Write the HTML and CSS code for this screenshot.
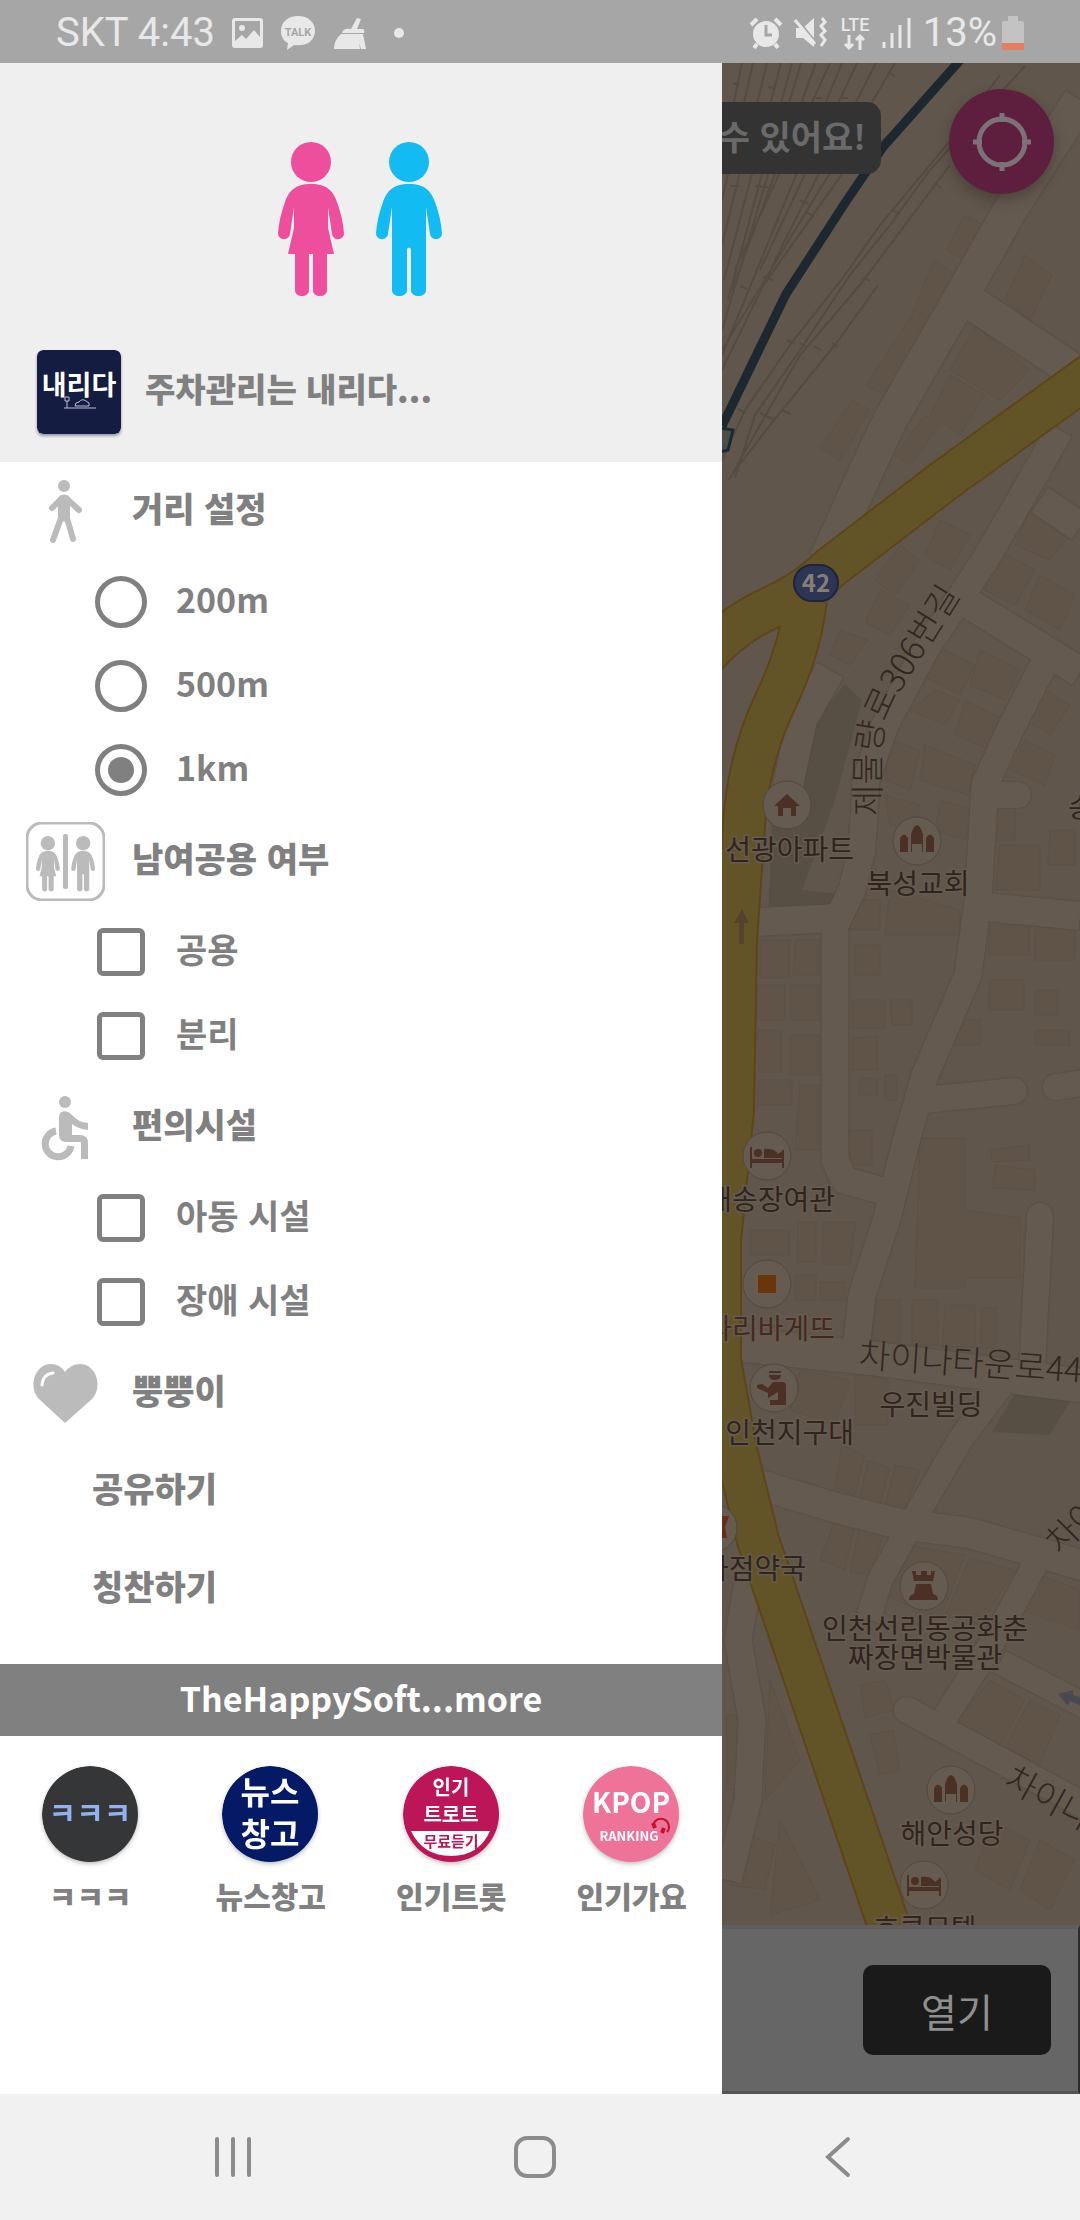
FILE: index.html
```html
<!DOCTYPE html>
<html lang="ko">
<head>
    <meta charset="UTF-8">
    <meta name="viewport" content="width=device-width, initial-scale=1.0">
    <title>화장실 찾기</title>
    <link rel="stylesheet" href="styles.css">
</head>
<body>
    <!-- shared shapes -->
    <svg class="defs" width="0" height="0" aria-hidden="true">
        <defs>
            <g id="woman">
                <circle cx="33" cy="20" r="20"/>
                <path d="M33 42C17 42 11 49 7 60C3 71 1 80 0 91C0 99 11 99 12 92L16 65V86L10 112H17V148C17 156 31 156 31 148V112H35V148C35 156 49 156 49 148V112H56L50 86V65L54 92C55 99 66 99 66 91C65 80 63 71 59 60C55 49 49 42 33 42Z"/>
            </g>
            <g id="man">
                <circle cx="33" cy="20" r="20"/>
                <path d="M33 42C17 42 11 49 7 60C3 71 1 80 0 91C0 99 11 99 12 92L16 65V148C16 156 31 156 31 148V107Q33 104 35 107V148C35 156 50 156 50 148V65L54 92C55 99 66 99 66 91C65 80 63 71 59 60C55 49 49 42 33 42Z"/>
            </g>
            <g id="poi-church">
                <path d="M-17 13V-1Q-13 -8 -9 -1V13ZM9 13V-1Q13 -8 17 -1V13ZM-6 13V-4Q-4 -13 0 -14Q4 -13 6 -4V13H5V5H-5V13Z"/>
            </g>
            <g id="poi-bed">
                <path d="M-17 -9H-15V3H15V-6H17V12H15V7H-15V12H-17ZM-3 2V-7Q7 -8 11 -2L15 -5V2Z"/>
                <circle cx="-9" cy="-3" r="4"/>
            </g>
        </defs>
    </svg>

    <header class="status-bar">
        <div class="status-group">
            <span>SKT 4:43</span>
            <svg width="31" height="30" viewBox="0 0 31 30"><path fill="#e8e8e8" fill-rule="evenodd" d="M3 0H28Q31 0 31 3V27Q31 30 28 30H3Q0 30 0 27V3Q0 0 3 0ZM3 23L10 17L14 21L22 12L28 19V3H3Z"/><circle cx="10" cy="10" r="3" fill="#e8e8e8"/></svg>
            <svg width="36" height="34" viewBox="0 0 36 34"><path fill="#e8e8e8" d="M18 0C8 0 1 6 1 15C1 21 4 25 8 27L7 34L14 29C27 31 35 24 35 15C35 6 28 0 18 0Z"/><text x="18" y="20" class="talk">TALK</text></svg>
            <svg width="34" height="32" viewBox="0 0 34 32"><path fill="#e8e8e8" d="M24 1L28 2L24 12H30Q32 13 31 16H9Q10 11 18 12ZM8 17H30L33 32H28L26 26L27 32H1Q1 23 8 17Z"/></svg>
            <span class="dot"></span>
        </div>
        <div class="status-group right">
            <svg width="34" height="32" viewBox="0 0 34 32"><g fill="none" stroke="#e8e8e8" stroke-width="4"><path d="M2 8L8 2M32 8L26 2M8 27L5 31M26 27L29 31"/></g><circle cx="17" cy="17" r="13" fill="#e8e8e8"/><path d="M17 8V18H23" fill="none" stroke="#a6a6a6" stroke-width="3"/></svg>
            <svg width="34" height="32" viewBox="0 0 34 32"><path fill="#e8e8e8" d="M2 11H9L20 1V30L9 21H2Z"/><path stroke="#a6a6a6" stroke-width="2" d="M3 2L21 24"/><path stroke="#e8e8e8" stroke-width="3" d="M1 3L21 27"/><path fill="none" stroke="#e8e8e8" stroke-width="3" d="M28 1L31 5L27 9L31 14L27 18L31 23L27 29"/></svg>
            <svg width="32" height="38" viewBox="0 0 32 38"><text x="16" y="17" class="lte">LTE</text><path fill="none" stroke="#e8e8e8" stroke-width="3" d="M10 21V34M6 30L10 34L14 30M21 36V22M17 26L21 22L25 26"/></svg>
            <svg width="30" height="32" viewBox="0 0 30 32"><path stroke="#e8e8e8" stroke-width="3" d="M2 25V31M10 16V31M18 8V31M27 1V31"/></svg>
            <span class="battery-text">13%</span>
            <svg width="22" height="34" viewBox="0 0 22 34"><path fill="#c3c3c3" d="M6 0H16V5H20Q22 5 22 7V27H0V7Q0 5 2 5H6Z"/><path fill="#e67e62" d="M0 27H22V32Q22 34 20 34H2Q0 34 0 32Z"/></svg>
        </div>
    </header>

    <main class="screen">
        <aside class="drawer">
            <div class="drawer-header">
                <svg class="logo" width="166" height="156" viewBox="0 0 166 156">
                    <use href="#woman" fill="#ee4f9d"/>
                    <use href="#man" x="98" fill="#12bcf3"/>
                </svg>
                <a class="promo" href="#">
                    <svg class="promo-icon" width="84" height="84" viewBox="0 0 84 84">
                        <rect width="84" height="84" rx="6" fill="#141c42"/>
                        <text x="42" y="45" class="promo-logo">내리다</text>
                        <path fill="none" stroke="#b9bdd0" stroke-width="1" d="M27 58H59M30 58V51M28 47H32V51H28ZM38 56L39 53L42 52Q45 48 49 51L52 53V56Z"/>
                    </svg>
                    <span class="label">주차관리는 내리다...</span>
                </a>
            </div>

            <form class="settings">
                <h2 class="section-title">
                    <svg width="79" height="79" viewBox="0 0 79 79" fill="none" stroke="#bbb" stroke-width="6" stroke-linecap="round" stroke-linejoin="round">
                        <circle cx="38" cy="14" r="6" fill="#bbb" stroke="none"/>
                        <path d="M26 36L36 26H40L53 38M35 30V46L27 68M41 30V46L47 67"/>
                        <path d="M38 28V44" stroke-width="11"/>
                    </svg>
                    <span class="label">거리 설정</span>
                </h2>
                <label class="option"><input type="radio" name="distance"><span class="label">200m</span></label>
                <label class="option"><input type="radio" name="distance"><span class="label">500m</span></label>
                <label class="option"><input type="radio" name="distance" checked><span class="label">1km</span></label>

                <h2 class="section-title">
                    <svg width="79" height="79" viewBox="0 0 79 79" fill="#bbb">
                        <rect x="1" y="1" width="77" height="77" rx="15" fill="none" stroke="#bbb" stroke-width="3"/>
                        <g transform="translate(10 14) scale(.36)"><use href="#woman"/><use href="#man" x="98"/></g>
                        <rect x="37" y="12" width="5" height="55" rx="2"/>
                    </svg>
                    <span class="label">남여공용 여부</span>
                </h2>
                <label class="option"><input type="checkbox"><span class="label">공용</span></label>
                <label class="option"><input type="checkbox"><span class="label">분리</span></label>

                <h2 class="section-title">
                    <svg width="79" height="79" viewBox="0 0 79 79" fill="#bbb">
                        <circle cx="39" cy="14" r="6"/>
                        <path d="M33 30C33 21 42 22 46 27Q52 34 62 35V42Q52 41 46 36V47H54Q62 47 62 55V71H55V54H40Q33 54 33 47Z"/>
                        <path d="M30 43A13 13 0 1 0 45 58" fill="none" stroke="#bbb" stroke-width="7"/>
                    </svg>
                    <span class="label">편의시설</span>
                </h2>
                <label class="option"><input type="checkbox"><span class="label">아동 시설</span></label>
                <label class="option"><input type="checkbox"><span class="label">장애 시설</span></label>

                <h2 class="section-title">
                    <svg width="79" height="79" viewBox="0 0 79 79">
                        <path fill="#bbb" d="M39 69L13 45C2 34 8 10 25 10Q34 10 39 18Q45 10 54 10C71 10 77 34 66 45Z"/>
                        <path fill="none" stroke="#fff" stroke-width="3" stroke-linecap="round" d="M16 31Q17 20 27 19"/>
                    </svg>
                    <span class="label">뿡뿡이</span>
                </h2>
                <button type="button" class="menu-link">공유하기</button>
                <button type="button" class="menu-link">칭찬하기</button>
            </form>

            <a class="more" href="#">TheHappySoft...more</a>

            <nav class="apps">
                <a href="#">
                    <svg class="app-icon" viewBox="0 0 97 97">
                        <circle cx="48" cy="48" r="48" fill="#353637"/>
                        <text x="48" y="58" font-size="30" fill="#93b1f0">ㅋㅋㅋ</text>
                    </svg>
                    ㅋㅋㅋ
                </a>
                <a href="#">
                    <svg class="app-icon" viewBox="0 0 97 97">
                        <circle cx="48" cy="48" r="48" fill="#051a66"/>
                        <text x="48" y="38" font-size="32" fill="#fff">뉴스</text>
                        <text x="48" y="80" font-size="32" fill="#fff">창고</text>
                    </svg>
                    뉴스창고
                </a>
                <a href="#">
                    <svg class="app-icon" viewBox="0 0 97 97">
                        <circle cx="48" cy="48" r="48" fill="#bd1658"/>
                        <path fill="#fff" d="M8 65H87Q76 90 48 90T8 65Z"/>
                        <text x="48" y="29" font-size="20" fill="#fff">인기</text>
                        <text x="48" y="56" font-size="20" fill="#fff">트로트</text>
                        <text x="48" y="81" font-size="15" fill="#bd1658">무료듣기</text>
                    </svg>
                    인기트롯
                </a>
                <a href="#">
                    <svg class="app-icon" viewBox="0 0 97 97">
                        <circle cx="48" cy="48" r="48" fill="#ef7399"/>
                        <text x="48" y="47" font-size="28" fill="#fff">KPOP</text>
                        <text x="46" y="75" font-size="13" fill="#fff">RANKING</text>
                        <path fill="none" stroke="#c4122b" stroke-width="2" d="M70 60A8 8 0 1 1 84 66"/>
                        <path stroke="#c4122b" stroke-width="4" d="M70 57L72 62M81 62L79 67"/>
                    </svg>
                    인기가요
                </a>
            </nav>
        </aside>

        <section class="content">
            <div class="map">
                <svg class="map-canvas" viewBox="722 63 358 1862" preserveAspectRatio="xMinYMin slice">
                    <defs>
                        <path id="street-306" d="M880 816V770C880 735 886 715 900 692L966 586"/>
                        <g id="streets">
                            <path d="M1080 100L1010 210L965 290L890 420L862 480L826 560M975 305L1080 375" stroke-width="34"/>
                            <path d="M1060 430L1020 500L985 560L925 650L885 725L866 780L862 850L852 890L835 925V1160L844 1180L886 1192" stroke-width="27"/>
                            <path d="M1040 500L1080 527M950 592L1080 672" stroke-width="30"/>
                            <path d="M1045 662L1010 730L985 785L978 900L968 975L925 1075L905 1145L888 1215L862 1295L856 1350" stroke-width="27"/>
                            <path d="M758 922L838 918M965 905L1080 916" stroke-width="28"/>
                            <path d="M925 1100L1014 1091M1056 1087L1090 1082M1040 1216L1032 1370M907 1710L1085 1806M985 795H1018" stroke-width="26" stroke-linecap="round"/>
                            <path d="M735 1344L870 1358L1085 1386" stroke-width="34"/>
                            <path d="M750 1482L830 1506L900 1524L970 1533L1085 1566" stroke-width="30"/>
                            <path d="M1005 1380L960 1440L905 1535L880 1580L868 1620M1040 1555L1000 1630L940 1725M1000 1662L1085 1706" stroke-width="25"/>
                            <path d="M750 1570L738 1640L752 1720L748 1800L728 1880" stroke-width="27"/>
                            <path d="M830 670L802 720L785 800" stroke-width="30"/>
                        </g>
                        <g id="highway">
                            <path d="M1100 368L945 480L830 568Q806 592 768 609T700 662"/>
                            <path d="M806 600Q800 650 776 700T745 810L736 940L733 1110L720 1240V1360L736 1450L758 1540L792 1640L892 1935"/>
                        </g>
                    </defs>

                    <rect x="722" y="63" width="2000" height="1862" fill="#61564b"/>

                    <!-- lots and buildings -->
                    <path fill="#574f44" d="M845 684L862 700L835 800L802 890L850 895L835 925H768L772 810L800 740ZM1020 1385H1080L1050 1435L992 1432Z"/>
                    <g fill="#605449" stroke="#5b5147" stroke-width="1">
                        <path d="M965 215L983 225L965 260L946 250ZM934 260L957 276L930 330L910 318ZM915 310L932 320L884 395L866 385ZM852 400L870 410L840 460L820 448Z"/>
                        <path d="M1025 255L1052 275L1030 320L1005 300ZM975 325L1030 370L1000 400L950 370ZM950 375L985 395L960 435L930 415ZM925 415L940 425L910 465L895 455Z"/>
                        <path d="M940 520L970 535L950 570L925 555ZM900 545L920 560L895 595L875 580ZM880 590L910 605L890 635L865 622ZM840 630L868 640L850 665L830 655Z"/>
                        <path d="M1000 550L1035 570L1015 605L985 590ZM1040 575L1075 595L1060 630L1025 610ZM1030 510L1070 535L1050 560L1015 545Z"/>
                        <path d="M925 640L975 665L960 695L910 670ZM980 650L1020 670L1005 700L970 685ZM935 690L960 700L945 725L910 710ZM965 700L1005 720L990 750L955 735Z"/>
                        <path d="M890 740L920 750L910 790L885 780ZM925 745L975 765L968 795L920 780ZM885 795L920 805L915 830L890 825ZM940 800L975 810L965 840L935 830Z"/>
                        <path d="M1045 690L1070 705L1050 735L1025 720ZM1025 740L1055 755L1045 785L1010 770ZM1050 830H1075V865H1048ZM995 800H1015V840H992ZM1000 845H1040V890H996Z"/>
                        <path d="M850 900H880V930H850ZM890 890L960 910V935H885ZM855 945H880V975H855ZM990 925H1030V955H988ZM1035 925H1075V960H1034Z"/>
                        <path d="M760 940H790V978H760ZM795 940H820V975H793ZM757 985H785V1020H757ZM790 985H820V1020H790ZM758 1030H782V1072H758ZM790 1035H820V1075H790ZM758 1080H792V1105H758ZM800 1085H820V1150H795Z"/>
                        <path d="M852 1000H885V1028H852ZM890 1000H912V1025H892ZM852 1038L878 1036V1070H852ZM860 1078H878V1095H858ZM885 1075H897V1100H885ZM850 1130H872V1165H850Z"/>
                        <path d="M920 1138H965V1210L1020 1218V1278H965V1288H915ZM990 1150L1030 1145V1160L992 1162ZM995 1165L1035 1170V1190L992 1188ZM955 1020H980V1045H952ZM990 980H1024V1010H988ZM1035 990H1058V1015H1035ZM1035 1030H1070V1045H1035Z"/>
                        <path d="M750 1230H790V1255H750ZM798 1222H816V1262H797ZM823 1222H856L850 1264H822ZM795 1275H816V1300H795ZM820 1282H845V1300H820ZM875 1300H900V1342H872ZM912 1300H938V1345H912ZM945 1305H975V1347H942ZM982 1308H996V1348H980Z"/>
                        <path d="M800 1370L850 1380L835 1425L790 1410ZM855 1372L888 1380V1425H855ZM842 1445L865 1455L855 1495L835 1488ZM868 1460L890 1468L880 1505L860 1498ZM895 1465L920 1470L905 1510L885 1505Z"/>
                        <path d="M835 1520L855 1525L845 1570L820 1560ZM860 1525L885 1530L870 1575L850 1572ZM905 1545L965 1555L940 1620L885 1595ZM970 1558L1015 1570L980 1625L945 1615ZM1040 1575L1080 1590V1630L1020 1610Z"/>
                        <path d="M990 1680L1025 1700L1000 1745L955 1722ZM1030 1700L1060 1715L1040 1765L1005 1748ZM860 1685L885 1680L895 1710L865 1718ZM870 1735L893 1730L900 1770L880 1775ZM770 1680L800 1760L765 1800ZM780 1820L820 1900L770 1915Z"/>
                        <path d="M726 1715H745V1790H726ZM735 1830L775 1845L765 1890L730 1885ZM990 1820L1030 1840L1010 1890L975 1870ZM1040 1840L1075 1860L1050 1910L1020 1890Z"/>
                    </g>

                    <!-- railway -->
                    <g class="rails">
                        <path d="M742 63L722 160M753 63L722 200M767 63L722 245M781 63L724 280M792 63L728 300M801 63L722 330M816 63L732 290M830 63L735 270M842 63L722 355M857 63L760 270M876 63L790 230L722 370M895 63L850 140L722 350M920 110L845 170L760 290"/>
                        <path d="M1000 75L955 135L880 225L845 275L790 345L745 410L722 460M1025 66L930 170L890 225L850 275L800 350L755 415L735 478M950 165L860 285L800 355L760 425L730 478M878 285L835 345L770 425L728 480"/>
                        <path d="M733 83L739 85M768 87L775 88M888 72L895 76M816 98H822M840 98H848M730 186H740M755 186L775 188M800 200L808 204M805 212L814 216M763 277L773 280M740 286L747 289M892 210L900 214M935 183L941 188M862 278L870 281M787 340L795 344M800 343L806 347M814 346L821 350M832 343L838 347M738 409L746 413M760 413L775 420M782 410L790 414"/>
                    </g>
                    <path fill="none" stroke="#1c2730" stroke-width="9" d="M962 58L883 147L845 203L786 294L722 426"/>
                    <path fill="#4d4d48" stroke="#1b2a33" stroke-width="3" d="M720 428L733 430L728 450L720 452Z"/>

                    <use href="#streets" class="street-edge"/>
                    <use href="#streets" class="street-fill"/>
                    <use href="#highway" class="highway-edge"/>
                    <use href="#highway" class="highway-fill"/>
                    <path fill="#51442b" d="M742 909L749 923H744V944H739V923H734Z"/>
                    <path fill="#4b4950" d="M1058 1694L1073 1690V1695L1082 1698V1706L1070 1701L1068 1706Z"/>

                    <rect x="794" y="565" width="44" height="36" rx="18" fill="#2c3554" stroke="#20233c" stroke-width="2"/>
                    <text x="816" y="592" class="route">42</text>

                    <g fill="#655b51" stroke="#51483f" stroke-width="1">
                        <circle cx="787" cy="805" r="24"/>
                        <circle cx="917" cy="841" r="24"/>
                        <circle cx="767" cy="1156" r="24"/>
                        <circle cx="767" cy="1284" r="24"/>
                        <circle cx="774" cy="1388" r="24"/>
                        <circle cx="713" cy="1528" r="24"/>
                        <circle cx="924" cy="1586" r="24"/>
                        <circle cx="951" cy="1790" r="24"/>
                        <circle cx="924" cy="1885" r="24"/>
                    </g>
                    <g fill="#4b3026">
                        <path d="M787 794L800 806H796V816H791V808H783V816H778V806H774Z"/>
                        <use href="#poi-church" x="917" y="839"/>
                        <use href="#poi-church" x="951" y="1789"/>
                        <use href="#poi-bed" x="767" y="1156"/>
                        <use href="#poi-bed" x="924" y="1884"/>
                        <path d="M769 1371H781V1373H769ZM769 1375H781Q781 1380 775 1380T769 1375ZM757 1385L762 1384L768 1388L773 1382H783Q786 1382 786 1386V1405H770V1400H778V1392L768 1398V1393L757 1388Z"/>
                        <path d="M912 1571H916V1575H921V1571H927V1575H931V1571H935L933 1581H914ZM916 1584H931L933 1594Q938 1595 938 1600H909Q909 1595 914 1594Z"/>
                    </g>
                    <path fill="#6b2b17" d="M720 1516H729L725 1527L727 1538H720Z"/>
                    <rect x="758" y="1275" width="18" height="18" fill="#693609"/>

                    <g class="street-label">
                        <text><textPath href="#street-306">제물량로306번길</textPath></text>
                        <text transform="translate(858 1367) rotate(4)">차이나타운로44</text>
                        <text transform="translate(1060 1556) rotate(-45)">차이</text>
                        <text transform="translate(1002 1786) rotate(29)">차이나</text>
                    </g>
                    <g class="place-label">
                        <text x="854" y="860" text-anchor="end">선광아파트</text>
                        <text x="918" y="894" text-anchor="middle">북성교회</text>
                        <text x="1068" y="818">송</text>
                        <text x="835" y="1210" text-anchor="end">해송장여관</text>
                        <text x="835" y="1339" text-anchor="end" class="brown">파리바게뜨</text>
                        <text x="931" y="1415" text-anchor="middle">우진빌딩</text>
                        <text x="854" y="1443" text-anchor="end">인천지구대</text>
                        <text x="806" y="1579" text-anchor="end">가점약국</text>
                        <text x="925" y="1639" text-anchor="middle">인천선린동공화춘</text>
                        <text x="925" y="1668" text-anchor="middle">짜장면박물관</text>
                        <text x="952" y="1844" text-anchor="middle">해안성당</text>
                        <text x="925" y="1939" text-anchor="middle">호콕모텔</text>
                    </g>
                </svg>
                <div class="toast">수 있어요!</div>
                <button type="button" class="locate" aria-label="현재 위치">
                    <svg width="58" height="58" viewBox="0 0 58 58" fill="none" stroke="#7d7278" stroke-width="5"><circle cx="29" cy="29" r="23"/><path d="M29 0V9M29 49V58M0 29H9M49 29H58"/></svg>
                </button>
            </div>
            <div class="ad-bar">
                <button type="button">열기</button>
            </div>
        </section>
    </main>

    <footer class="nav-bar">
        <button type="button" aria-label="최근 앱"><svg width="42" height="42" viewBox="0 0 42 42"><path d="M5 3V39M21 3V39M37 3V39"/></svg></button>
        <button type="button" aria-label="홈"><svg width="42" height="42" viewBox="0 0 42 42"><rect x="2" y="2" width="38" height="38" rx="11"/></svg></button>
        <button type="button" aria-label="뒤로"><svg width="42" height="42" viewBox="0 0 42 42"><path d="M31 3L11 21L31 39"/></svg></button>
    </footer>
</body>
</html>
```

FILE: styles.css
```css
* {
    box-sizing: border-box;
}
body {
    margin: 0;
    min-height: 100vh;
    display: flex;
    flex-direction: column;
    background-color: #ffffff;
    color: #808080;
    font-family: "Noto Sans CJK KR", sans-serif;
    font-size: 34px;
    line-height: 1;
}
button {
    border: none;
    background: none;
    padding: 0;
    font: inherit;
    color: inherit;
}
a {
    color: inherit;
    text-decoration: none;
}
svg {
    display: block;
    flex-shrink: 0;
}
.defs {
    position: absolute;
}

/* Status bar */
.status-bar {
    display: flex;
    justify-content: space-between;
    align-items: center;
    height: 63px;
    padding: 2px 56px 0;
    background-color: #a6a6a6;
    color: #e8e8e8;
    font-family: Roboto, sans-serif;
    font-size: 40px;
}
.status-group {
    display: flex;
    align-items: center;
    gap: 17px;
}
.status-group.right {
    gap: 11px;
}
.dot {
    width: 10px;
    height: 10px;
    margin-left: 10px;
    border-radius: 50%;
    background-color: #e8e8e8;
}
.battery-text {
    margin-right: -6px;
}
.talk {
    font-size: 11px;
    font-weight: bold;
    fill: #a6a6a6;
    text-anchor: middle;
}
.lte {
    font-size: 18px;
    font-weight: 500;
    fill: #e8e8e8;
    text-anchor: middle;
}

/* Drawer over the left two thirds */
.screen {
    flex: 1;
    display: grid;
    grid-template-columns: 722fr 358fr;
}
.drawer {
    min-width: 0;
    background-color: #ffffff;
    font-weight: 900;
}
.drawer-header {
    padding: 79px 37px 28px;
    background-color: #efefef;
}
.label {
    padding-bottom: 7px;
}
.logo {
    margin: 0 auto 52px;
}
.promo {
    display: flex;
    align-items: center;
    gap: 24px;
    font-size: 33px;
}
.promo-icon {
    border-radius: 6px;
    box-shadow: 0 2px 3px rgba(20, 28, 66, 0.4);
}
.promo-logo {
    font-size: 27px;
    font-weight: bold;
    fill: #ffffff;
    text-anchor: middle;
}
.settings {
    margin-bottom: 26px;
}
.section-title {
    display: flex;
    align-items: center;
    gap: 27px;
    height: 98px;
    margin: 0;
    padding-left: 26px;
    font-size: 34px;
    font-weight: 900;
}
.option {
    display: flex;
    align-items: center;
    gap: 29px;
    height: 84px;
    padding-left: 95px;
    font-weight: bold;
}
.option input {
    appearance: none;
    width: 52px;
    height: 52px;
    margin: 0;
    border: 5px solid #808080;
    background-color: #ffffff;
}
.option input[type="radio"] {
    padding: 8px;
    border-radius: 50%;
    background-clip: content-box;
}
.option input[type="radio"]:checked {
    background-color: #808080;
}
.option input[type="checkbox"] {
    width: 48px;
    height: 48px;
    margin: 0 2px;
    border-radius: 6px;
}
.menu-link {
    display: block;
    width: 100%;
    height: 98px;
    padding: 0 0 7px 92px;
    text-align: left;
}
.more {
    display: block;
    background-color: #808080;
    color: #ffffff;
    font-size: 34px;
    font-weight: bold;
    line-height: 68px;
    padding-bottom: 4px;
    text-align: center;
}
.apps {
    display: grid;
    grid-template-columns: repeat(4, 1fr);
    padding-top: 30px;
}
.apps a {
    display: flex;
    flex-direction: column;
    align-items: center;
    gap: 17px;
    font-size: 30px;
}
.app-icon {
    width: 97px;
    height: 97px;
    border-radius: 50%;
    font-weight: bold;
    filter: drop-shadow(0 2px 2px rgba(0, 0, 0, 0.25));
}
.app-icon text {
    text-anchor: middle;
}

/* Dimmed map */
.content {
    display: flex;
    flex-direction: column;
    min-width: 0;
    overflow: hidden;
}
.map {
    position: relative;
    flex: 1;
    min-height: 0;
    background-color: #61564b;
}
.map-canvas {
    position: absolute;
    width: 100%;
    height: 100%;
}
.rails {
    fill: none;
    stroke: #544b41;
    stroke-width: 2;
}
.street-edge,
.street-fill,
.highway-edge,
.highway-fill {
    fill: none;
    stroke-linejoin: round;
}
.street-edge {
    stroke: #554b41;
    filter: drop-shadow(0 0 1px #50463c);
}
.street-fill {
    stroke: #655a50;
}
.highway-edge {
    stroke: #5e4519;
    stroke-width: 44;
}
.highway-fill {
    stroke: #635427;
    stroke-width: 40;
}
.route {
    font-size: 24px;
    font-weight: bold;
    fill: #857e78;
    text-anchor: middle;
}
.street-label {
    font-size: 34px;
    font-weight: 300;
    fill: #32271f;
}
.place-label {
    font-size: 28px;
    fill: #31241d;
    stroke: #655b51;
    stroke-width: 3px;
    paint-order: stroke;
}
.place-label .brown {
    fill: #45291d;
}
.toast {
    position: absolute;
    top: 39px;
    right: 199px;
    height: 72px;
    padding: 0 15px 0 400px;
    border-radius: 14px;
    background-color: #333333;
    color: #6a6a6a;
    font-weight: bold;
    line-height: 68px;
    white-space: nowrap;
}
.locate {
    position: absolute;
    top: 26px;
    right: 26px;
    display: flex;
    align-items: center;
    justify-content: center;
    width: 105px;
    height: 105px;
    border-radius: 50%;
    background-color: #5e1f3f;
    box-shadow: 0 6px 14px rgba(0, 0, 0, 0.25);
}
.ad-bar {
    display: flex;
    justify-content: flex-end;
    padding: 36px 27px;
    border-top: 4px solid #605e5c;
    border-right: 2px solid #2b2b2b;
    border-bottom: 3px solid #555555;
    background-color: #666666;
}
.ad-bar button {
    width: 188px;
    height: 90px;
    border-radius: 10px;
    background-color: #1a1a1a;
    color: #8f8f8f;
    font-size: 39px;
}

/* System navigation */
.nav-bar {
    display: grid;
    grid-template-columns: repeat(3, 1fr);
    height: 126px;
    padding: 0 91px 0 82px;
    background-color: #f1f1f1;
}
.nav-bar button {
    display: flex;
    align-items: center;
    justify-content: center;
}
.nav-bar svg {
    fill: none;
    stroke: #8c8c8c;
    stroke-width: 4;
    stroke-linecap: round;
}
```
